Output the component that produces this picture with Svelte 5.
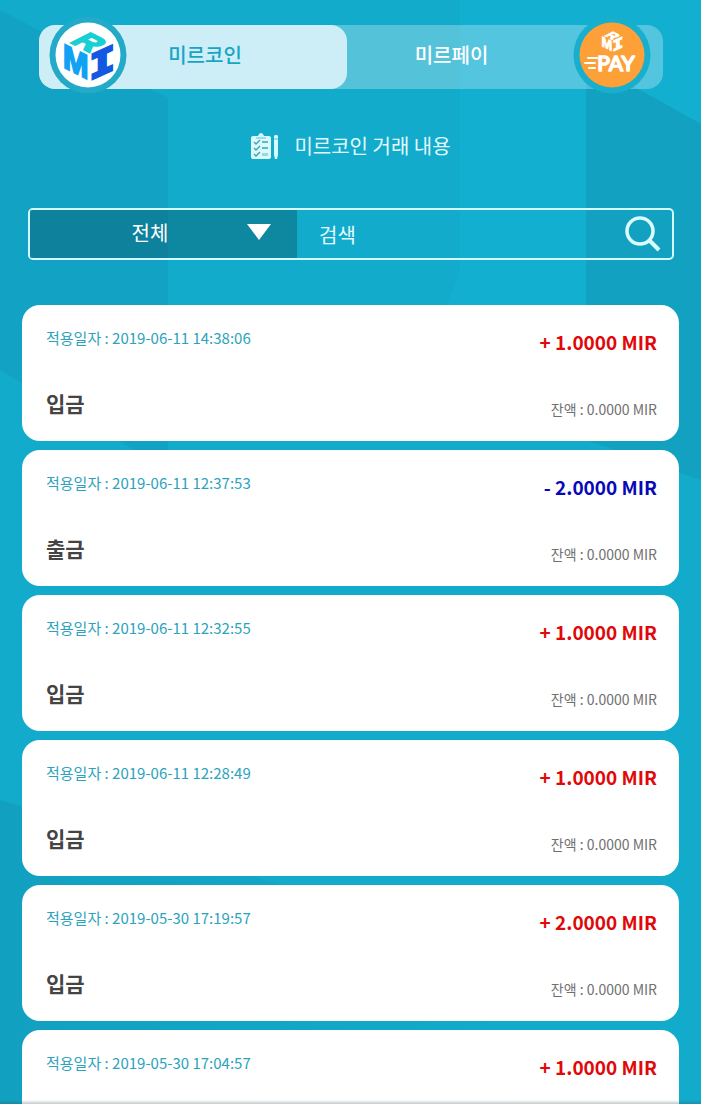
<script>
  const records = [
    { date: '2019-06-11 14:38:06', kind: '입금', amount: '+ 1.0000 MIR', balance: '0.0000 MIR' },
    { date: '2019-06-11 12:37:53', kind: '출금', amount: '- 2.0000 MIR', balance: '0.0000 MIR' },
    { date: '2019-06-11 12:32:55', kind: '입금', amount: '+ 1.0000 MIR', balance: '0.0000 MIR' },
    { date: '2019-06-11 12:28:49', kind: '입금', amount: '+ 1.0000 MIR', balance: '0.0000 MIR' },
    { date: '2019-05-30 17:19:57', kind: '입금', amount: '+ 2.0000 MIR', balance: '0.0000 MIR' },
    { date: '2019-05-30 17:04:57', amount: '+ 1.0000 MIR' }
  ];
  let tab = $state('coin');
  let filter = $state('전체');
  let query = $state('');
</script>

{#snippet cube(top, left, right)}
  <g font-weight="bold">
    <text transform="matrix(1.02 0.52 -1.02 0.52 20 26)" font-family="Liberation Sans, sans-serif" font-size="28" fill={top} stroke={top} stroke-width="2">R</text>
    <text transform="matrix(0.9 0.45 0 1 14 51)" font-family="Liberation Sans, sans-serif" font-size="34" fill={left} stroke={left} stroke-width="2">M</text>
    <text transform="matrix(1.1 -0.5 0 1 41 64)" font-family="Liberation Mono, monospace" font-size="37" fill={right} stroke={right} stroke-width="3">I</text>
  </g>
{/snippet}

<div class="page">
  <svg class="facets" viewBox="0 0 701 1104" preserveAspectRatio="none" aria-hidden="true">
    <defs>
      <linearGradient id="low" x1="0" x2="1">
        <stop offset="0" stop-color="#12a0c0" />
        <stop offset="1" stop-color="#12a0c0" stop-opacity="0" />
      </linearGradient>
    </defs>
    <rect width="701" height="1104" fill="#12abcb" />
    <path d="M0 10 L168 98 V470 L0 370Z" fill="#12a2c3" />
    <path d="M460 0 H701 V124 L586 60 V440 H400 L460 270Z" fill="#13afd1" />
    <path d="M586 60 L701 124 V480 L586 440Z" fill="#12a1c1" />
    <path d="M0 800 L500 950 V1104 H0Z" fill="url(#low)" />
  </svg>

  <main>
    <nav class="tabs">
      <button class="tab" class:active={tab === 'coin'} onclick={() => (tab = 'coin')}>
        <svg class="badge left" viewBox="0 0 78 78" aria-hidden="true">
          <circle cx="39" cy="39" r="38.500" fill="#22aac8" />
          <circle cx="39" cy="39" r="32.500" fill="#fff" />
          {@render cube('#18d0d4', '#12a2f4', '#1457e0')}
        </svg>
        <span>미르코인</span>
      </button>
      <button class="tab" class:active={tab === 'pay'} onclick={() => (tab = 'pay')}>
        <span>미르페이</span>
        <svg class="badge right" viewBox="0 0 78 78" aria-hidden="true">
          <circle cx="39" cy="39" r="38.500" fill="#18aecd" />
          <circle cx="39" cy="39" r="32.500" fill="#fda037" />
          <g transform="translate(22.600 8.500) scale(0.42)">{@render cube('#fff', '#fff', '#fff')}</g>
          <text x="43" y="55" font-family="Lato, sans-serif" font-size="21" fill="#fff" stroke="#fff" stroke-width="1.500" stroke-linejoin="round" text-anchor="middle">PAY</text>
          <path d="M15 42h9M12 47h10M16 52h6" stroke="#fff" stroke-width="2" stroke-linecap="round" />
        </svg>
      </button>
    </nav>

    <h1>
      <svg width="28" height="28" viewBox="0 0 28 28" aria-hidden="true">
        <path d="M4 4h4q1-3 3-3t3 3h5q2 0 2 2v19q0 2-2 2H3q-2 0-2-2V6q0-2 2-2Z" fill="#d9fbff" />
        <path d="M6 6h10" stroke="#62bed0" stroke-width="1" />
        <path d="M4 10l2 2 4-4M4 16l2 2 4-4M4 22l2 2 4-4M12 10h6M12 16h6" fill="none" stroke="#459fb0" stroke-width="1.300" />
        <path d="M12 21h6v3h-6z" fill="#9dd6df" />
        <path d="M24 4q0-1 2-1t2 1v19l-1 4h-2l-1-4Z" fill="#d9fbff" />
        <path d="M24 7h4" stroke="#62bed0" stroke-width="1" />
      </svg>
      미르코인 거래 내용
    </h1>

    <form class="search" onsubmit={(e) => e.preventDefault()}>
      <div class="filter">
        <select aria-label="구분" bind:value={filter}>
          <option>전체</option>
          <option>입금</option>
          <option>출금</option>
        </select>
        <svg class="caret" width="24" height="16" viewBox="0 0 24 16" aria-hidden="true"><path d="M0 0h24L12 16Z" fill="#fff" /></svg>
      </div>
      <input type="text" aria-label="검색" placeholder="검색" bind:value={query} />
      <button class="go" aria-label="검색">
        <svg width="36" height="36" viewBox="0 0 36 36" fill="none" stroke="#d9fcff" aria-hidden="true">
          <circle cx="15" cy="15" r="13" stroke-width="3.500" />
          <path d="M24 24l10 10" stroke-width="4" />
        </svg>
      </button>
    </form>

    <ul>
      {#each records as r}
        <li>
          <span class="date">적용일자 : {r.date}</span>
          <strong class="amount" class:out={r.amount.startsWith('-')}>{r.amount}</strong>
          {#if r.kind}
            <strong class="kind">{r.kind}</strong>
            <span class="balance">잔액 : {r.balance}</span>
          {/if}
        </li>
      {/each}
    </ul>
  </main>
  <div class="edge"></div>
</div>

<style>
  :global(body) { background: #12abcb; }
  .page {
    position: relative;
    height: 100vh;
    overflow: hidden;
    font-family: 'Noto Sans CJK KR', sans-serif;
  }
  .facets { position: absolute; inset: 0; width: 100%; height: 100%; }
  main { position: relative; padding: 25px 22px 0; }
  button, input, select { font: inherit; color: inherit; border: 0; background: none; padding: 0; margin: 0; }
  .tabs {
    display: grid;
    grid-template-columns: 77fr 79fr;
    height: 64px;
    margin: 0 16px 0 17px;
    border-radius: 16px;
    background: rgba(255, 255, 255, 0.28);
  }
  .tab {
    position: relative;
    border-radius: 16px;
    color: #fff;
    font-size: 20px;
    font-weight: 500;
    line-height: 28px;
    padding: 0 0 4px;
  }
  .tab:first-child { padding-left: 24px; }
  .tab:last-child { padding-right: 107px; }
  .tab.active { background: #cdeef6; color: #18a5c5; }
  .badge { position: absolute; top: -9px; width: 78px; height: 78px; }
  .left { left: 10px; }
  .right { right: 12px; }
  h1 {
    display: flex;
    align-items: center;
    justify-content: center;
    gap: 16px;
    margin: 43px 0 0;
    color: #e3fbff;
    font-size: 20px;
    font-weight: 400;
    line-height: 28px;
  }
  .search {
    display: flex;
    height: 48px;
    margin: 48px 5px 0 6px;
    border: 2px solid #d2faff;
    border-radius: 5px;
    color: #e3fbff;
    font-size: 20px;
  }
  .filter { position: relative; flex: 0 0 267px; background: rgba(12, 90, 110, 0.45); }
  select {
    width: 100%;
    height: 100%;
    appearance: none;
    padding: 0 27px 4px 0;
    text-align: center;
    text-align-last: center;
    color: #fff;
  }
  option { color: #444; }
  .caret { position: absolute; right: 26px; top: 14px; pointer-events: none; }
  input { flex: 1; min-width: 0; padding-left: 22px; outline: 0; }
  input::placeholder { color: #e3fbff; opacity: 1; }
  .go { padding: 0 11px; line-height: 0; }
  ul {
    display: grid;
    gap: 9px;
    margin: 45px 0 0;
    padding: 0;
    list-style: none;
  }
  li {
    display: grid;
    grid-template-columns: 1fr auto;
    align-content: space-between;
    min-height: 136px;
    box-sizing: border-box;
    padding: 21px 22px 22px 24px;
    border-radius: 18px;
    background: #fff;
  }
  .date { color: #2ba3bd; font-size: 15px; line-height: 24px; }
  .amount { color: #e00808; font-size: 19px; font-weight: 700; line-height: 32px; text-align: right; }
  .amount.out { color: #0808b8; }
  .kind { color: #444; font-size: 21px; font-weight: 700; line-height: 32px; }
  .balance { color: #707070; font-size: 14px; line-height: 20px; text-align: right; align-self: end; }
  .edge { position: absolute; left: 0; right: 0; bottom: 0; height: 4px; background: linear-gradient(transparent, rgba(50, 80, 90, 0.3)); }
</style>
